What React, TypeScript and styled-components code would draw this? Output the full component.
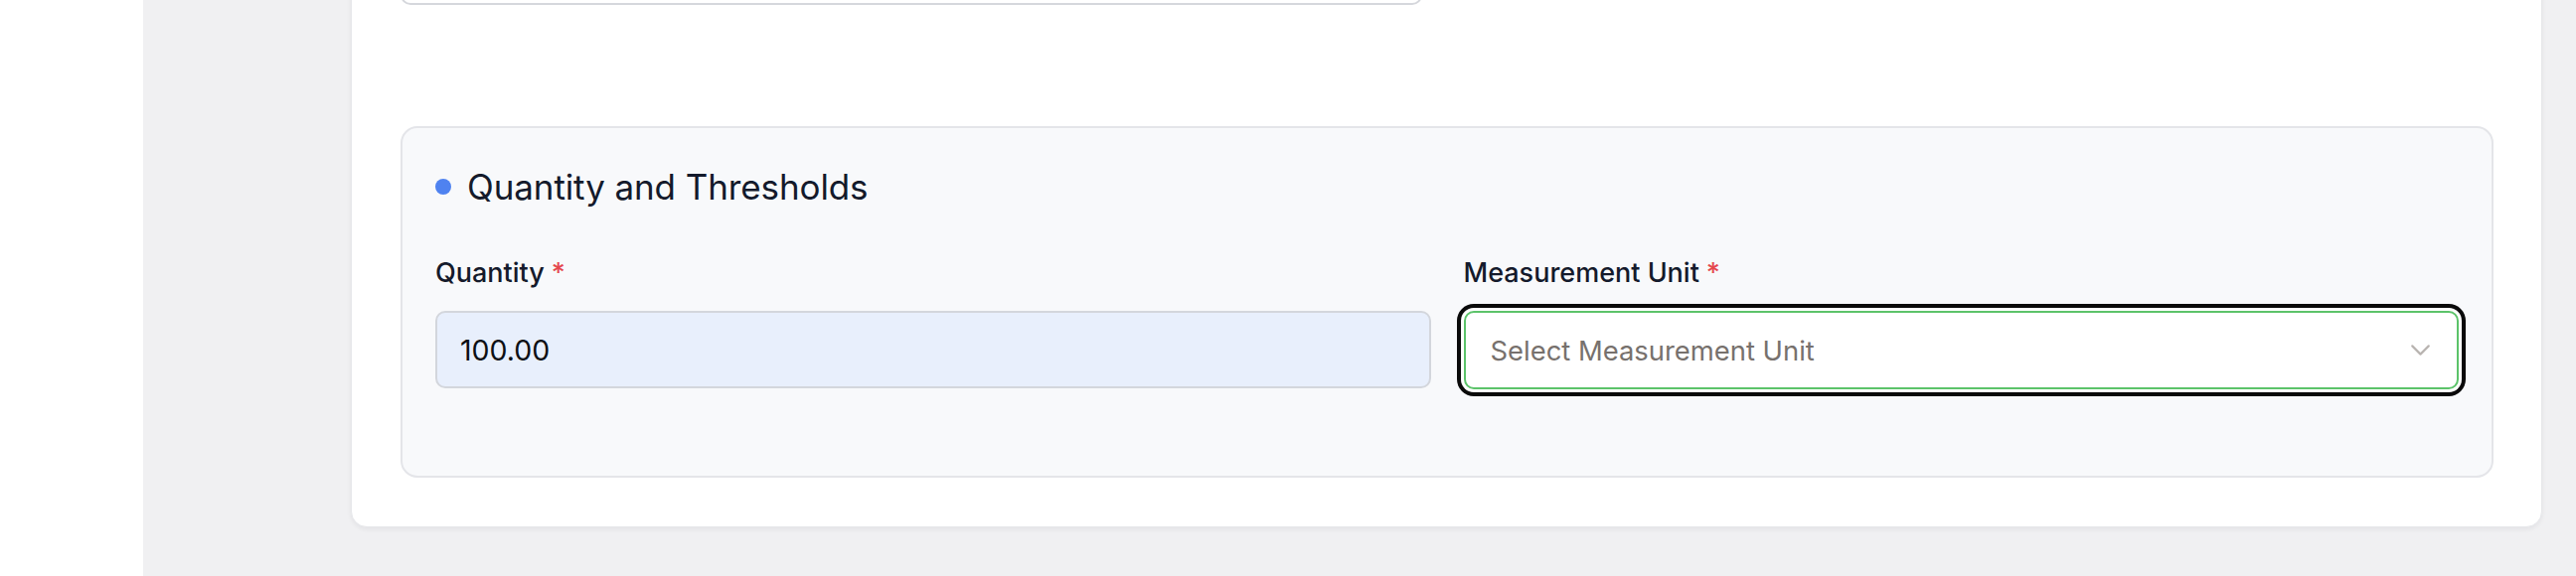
import React from "react";
import styled, { createGlobalStyle } from "styled-components";

const Global = createGlobalStyle`
  html, body { margin: 0; padding: 0; background: #ffffff; }
  body { font-family: Inter, "Noto Sans", "Liberation Sans", sans-serif; color: #111827; }
  * { box-sizing: border-box; }
`;

const Page = styled.div`
  display: flex;
  height: 580px;
  overflow: hidden;
`;

const Sidebar = styled.aside`
  width: 144px;
  flex: 0 0 144px;
  background: #ffffff;
`;

const Main = styled.main`
  flex: 1;
  background: #f0f0f2;
  padding: 0 34px 0 209px;
`;

const Card = styled.section`
  margin-top: -124px;
  background: #ffffff;
  border: 1px solid #e6e7ea;
  border-radius: 16px;
  box-shadow: 0 2px 5px rgba(15, 23, 42, 0.06);
  padding: 49px 48px 49px 49px;
`;

const Grid = styled.div<{ $gap: number }>`
  display: grid;
  grid-template-columns: 1fr 1fr;
  column-gap: ${(p) => p.$gap}px;
`;

const PrevInput = styled.div`
  height: 79px;
  border: 2px solid #d5d7dc;
  border-radius: 10px;
  background: #ffffff;
`;

const Spacer = styled.div`
  height: 122px;
`;

const Section = styled.div`
  background: #f8f9fb;
  border: 2px solid #e4e5e9;
  border-radius: 17px;
  padding: 36px 33px 87px 33px;
`;

const Title = styled.h3`
  display: flex;
  align-items: center;
  gap: 16px;
  margin: 0 0 47px 0;
  font-size: 35px;
  line-height: 46px;
  font-weight: 400;
  color: #141a2b;
  letter-spacing: -0.1px;
`;

const Dot = styled.span`
  width: 16px;
  height: 16px;
  border-radius: 50%;
  background: #4f82f0;
  flex: 0 0 16px;
`;

const Field = styled.div`
  display: flex;
  flex-direction: column;
  gap: 22px;
`;

const Label = styled.label`
  font-size: 27px;
  line-height: 33px;
  font-weight: 500;
  color: #141a2b;
`;

const Req = styled.span`
  color: #e5484d;
  margin-left: 7px;
`;

const TextInput = styled.div`
  height: 78px;
  display: flex;
  align-items: center;
  padding: 0 23px;
  background: #e8effc;
  border: 2px solid #d3d6dc;
  border-radius: 10px;
  font-size: 28.5px;
  color: #0d0f14;
`;

const SelectBox = styled.div`
  height: 79px;
  display: flex;
  align-items: center;
  justify-content: space-between;
  padding: 0 20px 0 25px;
  background: #ffffff;
  border: 2px solid #5cc36a;
  border-radius: 10px;
  box-shadow: 0 0 0 3px #ffffff, 0 0 0 7px #0a0a0a;
  font-size: 27.4px;
  color: #77716d;
`;

const Chevron = () => (
  <svg width="33" height="33" viewBox="0 0 24 24" fill="none" stroke="#b9b4b1" strokeWidth="1.6" strokeLinecap="round" strokeLinejoin="round">
    <path d="m6 9 6 6 6-6" />
  </svg>
);

export default function App() {
  return (
    <>
      <Global />
      <Page>
        <Sidebar />
        <Main>
          <Card>
            <Grid $gap={50}>
              <PrevInput />
            </Grid>
            <Spacer />
            <Section>
              <Title>
                <Dot />
                Quantity and Thresholds
              </Title>
              <Grid $gap={33}>
                <Field>
                  <Label>
                    Quantity<Req>*</Req>
                  </Label>
                  <TextInput>100.00</TextInput>
                </Field>
                <Field>
                  <Label>
                    Measurement Unit<Req>*</Req>
                  </Label>
                  <SelectBox>
                    Select Measurement Unit
                    <Chevron />
                  </SelectBox>
                </Field>
              </Grid>
            </Section>
          </Card>
        </Main>
      </Page>
    </>
  );
}
